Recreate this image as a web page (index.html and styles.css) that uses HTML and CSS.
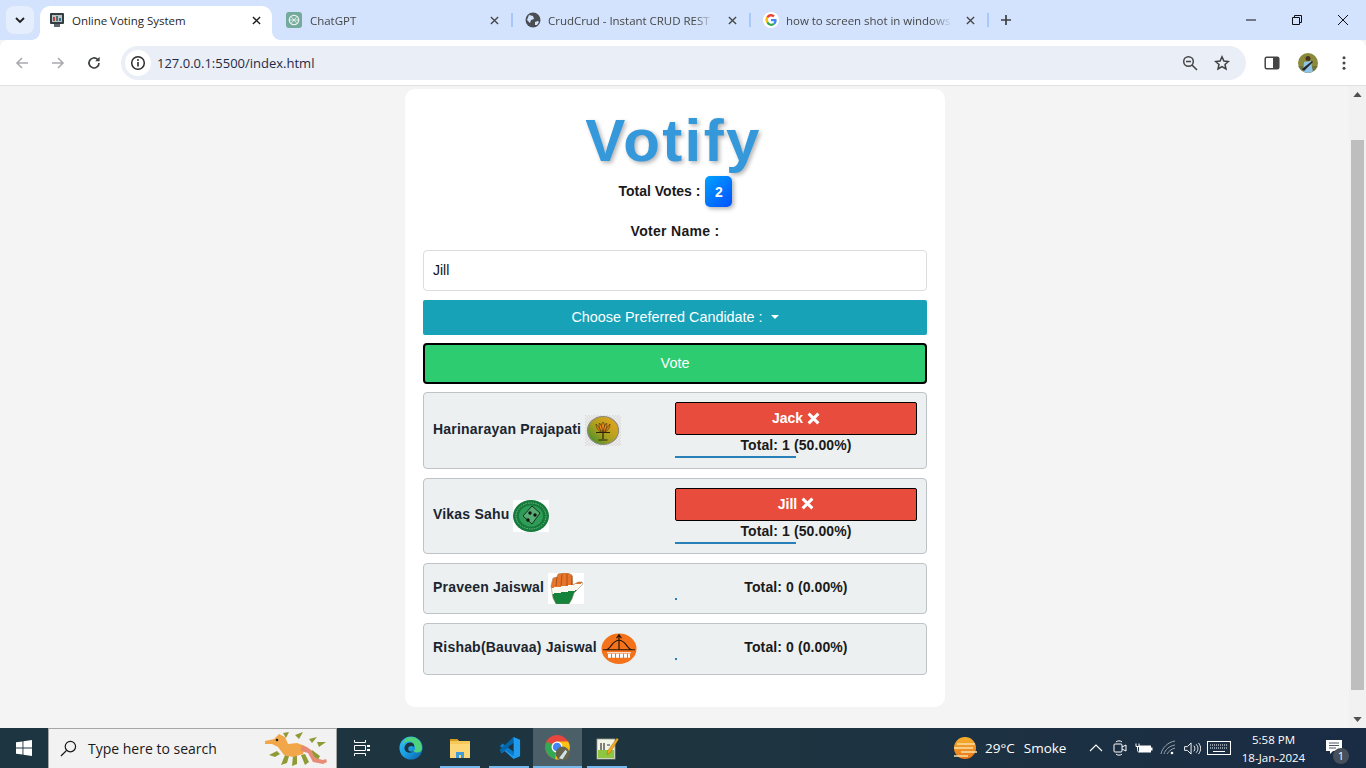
FILE: index.html
```html
<!DOCTYPE html>
<html lang="en">
<head>
<meta charset="utf-8">
<title>Online Voting System</title>
<link rel="stylesheet" href="styles.css">
</head>
<body>
<div class="tabstrip">
  <button class="tabsearch"><svg class="i12" viewBox="0 0 12 12"><path d="M2 4l4 4 4-4" fill="none" stroke="#1f1f1f" stroke-width="1.8"/></svg></button>
  <div class="tab active">
    <svg class="fav" viewBox="0 0 16 16"><rect x="1" y="1" width="14" height="11" rx="1" fill="#333d42"/><rect x="3" y="3" width="10" height="7" fill="#b9c4c6"/><rect x="4" y="5" width="2" height="4" fill="#b5443c"/><rect x="7" y="4" width="2" height="5" fill="#5a6c72"/><rect x="10" y="6" width="2" height="3" fill="#3a6f8c"/><rect x="5" y="12" width="6" height="3" fill="#5d686c"/></svg>
    <span class="tabtitle">Online Voting System</span>
    <svg class="tabclose dark" viewBox="0 0 10 10"><path d="M1 1l8 8M9 1l-8 8"/></svg>
  </div>
  <div class="tab first">
    <svg class="fav" viewBox="0 0 16 16"><rect width="16" height="16" rx="3" fill="#74aa9c"/><circle cx="8" cy="8" r="4.7" fill="none" stroke="#e8f2ef" stroke-width="1.3"/><path d="M5 4.5l6 7M11 4.5l-6 7M3.5 8h9" stroke="#e8f2ef" stroke-width=".9"/></svg>
    <span class="tabtitle">ChatGPT</span>
    <svg class="tabclose" viewBox="0 0 10 10"><path d="M1 1l8 8M9 1l-8 8"/></svg>
  </div>
  <div class="tab sep">
    <svg class="fav" viewBox="0 0 16 16"><circle cx="8" cy="8" r="7.5" fill="#4a4d52"/><path d="M4 3l4 1 1 3-3 1-1 3-3-3zM10 10l3-1 1 1-2 3-2 0z" fill="#d3e3fd"/></svg>
    <span class="tabtitle">CrudCrud - Instant CRUD REST</span>
    <svg class="tabclose" viewBox="0 0 10 10"><path d="M1 1l8 8M9 1l-8 8"/></svg>
  </div>
  <div class="tab sep">
    <svg class="fav" viewBox="0 0 16 16"><circle cx="8" cy="8" r="8" fill="#fff"/><path d="M8 7v2.2h3.3a3.4 3.4 0 0 1-1.3 2l1.8 1.4A5.4 5.4 0 0 0 13.4 7z" fill="#4285f4"/><path d="M3.4 10.700a5.400 5.400 0 0 0 8.400 1.900L10 11.200a3.300 3.300 0 0 1-4.700-1.700z" fill="#34a853"/><path d="M5.300 6.100L3.400 4.700a5.400 5.400 0 0 0 0 6l1.900-1.300a3.300 3.300 0 0 1 0-3.300z" fill="#fbbc05"/><path d="M3.400 4.700l1.900 1.400A3.300 3.300 0 0 1 10.200 5.200l1.600-1.600A5.400 5.400 0 0 0 3.400 4.700z" fill="#ea4335"/></svg>
    <span class="tabtitle">how to screen shot in windows</span>
    <svg class="tabclose" viewBox="0 0 10 10"><path d="M1 1l8 8M9 1l-8 8"/></svg>
  </div>
  <div class="newtab"><svg class="i12" viewBox="0 0 12 12"><path d="M6 1v10M1 6h10" stroke="#3c4043" stroke-width="1.700" fill="none"/></svg></div>
  <div class="winctrls">
    <svg class="winicon" viewBox="0 0 12 12"><path d="M1 6h10" stroke="#111" fill="none"/></svg>
    <svg class="winicon" viewBox="0 0 12 12"><path d="M1.500 3.500h7v7h-7zM3.500 3.500v-2h7v7h-2" stroke="#111" fill="none"/></svg>
    <svg class="winicon" viewBox="0 0 12 12"><path d="M1 1l10 10M11 1L1 11" stroke="#111" fill="none"/></svg>
  </div>
</div>

<div class="toolbar">
  <div class="navbtn"><svg class="i16" viewBox="0 0 16 16"><path d="M14 8H3M8 3L3 8l5 5" fill="none" stroke="#a9abae" stroke-width="1.600"/></svg></div>
  <div class="navbtn"><svg class="i16" viewBox="0 0 16 16"><path d="M2 8h11M8 3l5 5-5 5" fill="none" stroke="#a9abae" stroke-width="1.600"/></svg></div>
  <div class="navbtn"><svg class="i16" viewBox="0 0 16 16"><path d="M13 8a5 5 0 1 1-1.500-3.600" fill="none" stroke="#3c4043" stroke-width="1.700"/><path d="M13.600 1.800v4.400H9.200z" fill="#3c4043"/></svg></div>
  <div class="omnibox">
    <div class="siteinfo"><svg class="i16" viewBox="0 0 16 16"><circle cx="8" cy="8" r="6.300" fill="none" stroke="#2b2b2b" stroke-width="1.500"/><path d="M8 7v4.500" stroke="#2b2b2b" stroke-width="1.600"/><circle cx="8" cy="4.900" r="1" fill="#2b2b2b"/></svg></div>
    <span class="url">127.0.0.1:5500/index.html</span>
    <svg class="omniicon zoomicon" viewBox="0 0 16 16"><circle cx="6.500" cy="6.500" r="4.800" fill="none" stroke="#454545" stroke-width="1.500"/><path d="M4 6.500h5M10 10l5 5" stroke="#454545" stroke-width="1.600"/></svg>
    <svg class="omniicon" viewBox="0 0 16 16"><path d="M8 1.800l1.900 4.200 4.500.5-3.400 3 1 4.500L8 11.700 4 14l1-4.500-3.400-3 4.500-.5z" fill="none" stroke="#3f3f3f" stroke-width="1.500"/></svg>
  </div>
  <div class="navbtn"><svg class="i16" viewBox="0 0 16 16"><rect x="1.200" y="2.200" width="13.600" height="11.600" rx="1.500" fill="#fff" stroke="#454545" stroke-width="1.500"/><rect x="9" y="2.200" width="5.800" height="11.600" fill="#454545"/></svg></div>
  <div class="navbtn"><svg class="avatar" viewBox="0 0 20 20"><defs><clipPath id="ac"><circle cx="10" cy="10" r="10"/></clipPath></defs><g clip-path="url(#ac)"><rect width="20" height="20" fill="#8b8a3c"/><rect y="13" width="20" height="7" fill="#6e7440"/><circle cx="10" cy="5.500" r="2.500" fill="#4a3420"/><path d="M6 9l7-1 2 12H5z" fill="#8fc4e6"/><path d="M4 16l10-8 1 1-9 9z" fill="#22272c"/></g></svg></div>
  <div class="navbtn"><svg class="i16" viewBox="0 0 16 16"><circle cx="8" cy="2.800" r="1.500" fill="#454545"/><circle cx="8" cy="8" r="1.500" fill="#454545"/><circle cx="8" cy="13.200" r="1.500" fill="#454545"/></svg></div>
</div>

<div class="viewport">
  <main class="page">
    <section class="card">
      <h1 class="brand">Votify</h1>
      <div class="totals"><span class="totals-label">Total Votes :</span><span class="badge">2</span></div>
      <label class="voter-label">Voter Name :</label>
      <input class="voter-input" type="text" value="Jill">
      <button class="choose">Choose Preferred Candidate : <span class="caret"></span></button>
      <button class="vote">Vote</button>

      <div class="cand">
        <div class="cand-name"><span>Harinarayan Prajapati</span>
          <svg class="logo" viewBox="0 0 36 31"><defs><pattern id="chk" width="3" height="3" patternUnits="userSpaceOnUse"><rect width="3" height="3" fill="#f2f2f2"/><rect width="1.500" height="1.500" fill="#d9d9d9"/><rect x="1.500" y="1.500" width="1.500" height="1.500" fill="#d9d9d9"/></pattern><linearGradient id="bjp" x1="0" y1="1" x2="1" y2="0"><stop offset="0" stop-color="#2c8a2e"/><stop offset=".45" stop-color="#a9a01f"/><stop offset="1" stop-color="#f5a51b"/></linearGradient></defs><rect width="36" height="31" fill="url(#chk)"/><ellipse cx="18" cy="15.500" rx="15.500" ry="14" fill="url(#bjp)" stroke="#8a8a80" stroke-width="1.200"/><g fill="#ef8a1f" stroke="#3f2c08" stroke-width=".6"><path d="M18 7c2 2 2 7 0 10-2-3-2-8 0-10z"/><path d="M14.500 8c2 2 3 6 3 9-3-2-4-6-3-9z"/><path d="M21.500 8c-2 2-3 6-3 9 3-2 4-6 3-9z"/><path d="M11 9c2 2 4 5 5 8-3-1-5-5-5-8z"/><path d="M25 9c-2 2-4 5-5 8 3-1 5-5 5-8z"/></g><path d="M11 17.500h14M18 17v7M13.500 25h9" stroke="#2e2408" stroke-width="1.200" fill="none"/></svg>
        </div>
        <div class="cand-side">
          <button class="voter-chip">Jack <svg class="x" viewBox="0 0 12 12"><path d="M1.500 1.500l9 9M10.500 1.500l-9 9"/></svg></button>
          <div class="tot">Total: 1 (50.00%)</div>
          <div class="bar half"></div>
        </div>
      </div>

      <div class="cand">
        <div class="cand-name"><span>Vikas Sahu</span>
          <svg class="logo vikas" viewBox="0 0 36 32"><rect width="36" height="32" fill="#fff"/><ellipse cx="18" cy="16" rx="18" ry="16" fill="#167a3c"/><ellipse cx="18" cy="16" rx="15" ry="13" fill="none" stroke="#6cc088" stroke-width="1" stroke-dasharray="1.500 1"/><ellipse cx="18" cy="16" rx="12" ry="10.500" fill="#2f9d57"/><path d="M19 6l8 7-8 11-9-8z" fill="#58ad74" stroke="#0f2a1a" stroke-width=".9"/><circle cx="17" cy="13" r="1.700" fill="#111"/><circle cx="22" cy="15" r="1.700" fill="#111"/><circle cx="15" cy="20" r="1.700" fill="#111"/></svg>
        </div>
        <div class="cand-side">
          <button class="voter-chip">Jill <svg class="x" viewBox="0 0 12 12"><path d="M1.500 1.500l9 9M10.500 1.500l-9 9"/></svg></button>
          <div class="tot">Total: 1 (50.00%)</div>
          <div class="bar half"></div>
        </div>
      </div>

      <div class="cand short">
        <div class="cand-name"><span>Praveen Jaiswal</span>
          <svg class="logo" viewBox="0 0 36 31"><defs><linearGradient id="flag" x1="0" y1="0" x2=".15" y2="1"><stop offset=".47" stop-color="#e8742a"/><stop offset=".47" stop-color="#fbf8f0"/><stop offset=".66" stop-color="#fbf8f0"/><stop offset=".66" stop-color="#15843a"/></linearGradient></defs><rect width="36" height="31" fill="#fff"/><path d="M3 13l2-8 4-1 1-3 5-1 5 0 4 2 1 10 5-3 4 0 1 2-4 4-5 5-2 6-3 5H8l-3-6z" fill="url(#flag)" stroke="#8a7a66" stroke-width=".5"/><path d="M9 4l-1 9M14 1l-1 12M19 1v12M24 3l-.500 9" stroke="#9a4a14" stroke-width=".8" fill="none"/></svg>
        </div>
        <div class="cand-side">
          <div class="tot">Total: 0 (0.00%)</div>
          <div class="bar none"></div>
        </div>
      </div>

      <div class="cand short">
        <div class="cand-name"><span>Rishab(Bauvaa) Jaiswal</span>
          <svg class="logo tall" viewBox="0 0 36 31"><ellipse cx="18" cy="15.500" rx="17.500" ry="15.200" fill="#f4731a"/><path d="M2 16.500h32M5 16.500C10 16 11 7 18 7s8 9 13 9.500" fill="none" stroke="#25140a" stroke-width="1.200"/><path d="M18 2v14.500M15.500 5L18 1.500 20.500 5" fill="none" stroke="#25140a" stroke-width="1.200"/><path d="M6 19.500h24" stroke="#fff" stroke-width="1"/><path d="M7 22.500h22" stroke="#fff" stroke-width="4" stroke-dasharray="3 1"/></svg>
        </div>
        <div class="cand-side">
          <div class="tot">Total: 0 (0.00%)</div>
          <div class="bar none"></div>
        </div>
      </div>
    </section>
  </main>
  <aside class="scrollbar">
    <svg class="sarrow" viewBox="0 0 10 6"><path d="M5 0l5 6H0z" fill="#505050"/></svg>
    <div class="strack"><div class="sthumb"></div></div>
    <svg class="sarrow" viewBox="0 0 10 6"><path d="M0 0h10L5 6z" fill="#505050"/></svg>
  </aside>
</div>

<footer class="taskbar">
  <div class="start"><svg class="winlogo" viewBox="0 0 16 16"><path d="M0 2.300l6.500-.9v6.200H0zM7.400 1.300L16 0v7.600H7.400zM0 8.500h6.500v6.100L0 13.700zM7.400 8.500H16V16l-8.600-1.200z" fill="#fff"/></svg></div>
  <div class="search">
    <svg class="searchglass" viewBox="0 0 18 18"><circle cx="11" cy="7" r="5.500" fill="none" stroke="#1a1a1a" stroke-width="1.300"/><path d="M7 11l-6 6" stroke="#1a1a1a" stroke-width="1.400"/></svg>
    <span class="searchtext">Type here to search</span>
    <svg class="doodle" viewBox="0 0 66 36"><path d="M18 2l6-1-3 6zM30 4l8-3-4 7zM44 8l8-2-5 6zM52 11l9 0-7 5zM12 20l-8 4 6 2 5-3zM20 24l-4 10 6-2 2-7zM28 25l-1 10 5-2 0-8zM36 24l4 10 4-3-4-8zM44 22l9 7 2-4-8-6z" fill="#8f9a35"/><path d="M0 10l9-2 5-5 6 3 3 7 9-1 8 3-2 8-10 3-9-2-6-8-6-3-7 0z" fill="#f2a64a"/><path d="M36 14l6 2 4 3 4 8 8 2 3-1 1 3-4 2-10-2-5-9-7-2z" fill="#e78a76"/><circle cx="12" cy="9" r="1.300" fill="#222"/></svg>
  </div>
  <div class="app"><svg class="appicon" viewBox="0 0 16 16"><path d="M.5 0v2.500h11V0M.5 16v-2.500h11V16M.5 5.500h11v5H.5z" fill="none" stroke="#fff"/><rect x="13" y="5" width="3" height="2" fill="#fff"/><rect x="13" y="9" width="3" height="2" fill="#fff"/></svg></div>
  <div class="app"><svg class="appicon big" viewBox="0 0 26 26"><defs><linearGradient id="edge" x1="0" y1="0" x2="1" y2="1"><stop offset="0" stop-color="#35c1f1"/><stop offset=".5" stop-color="#1b9de2"/><stop offset="1" stop-color="#0c59a4"/></linearGradient></defs><circle cx="13" cy="13" r="12.500" fill="url(#edge)"/><path d="M9 2c8-3 16 3 16 11 0 3-2 5-5 5-2 0-4-1-4-2 1-1 2-2 1-5-1-4-5-6-8-5-2 .5-4 2-5 4 .5-3 2.500-7 5-8z" fill="#4fd27c"/><path d="M16 16c-2 3-9 3-10-2-.5-3 2-7 6-7 4 0 5 3 4 5-2-2-6-1-6 2s4 4 6 2z" fill="#1c3340"/></svg></div>
  <div class="app lit"><svg class="appicon big" viewBox="0 0 24 24"><path d="M2 3h7l2 2h11v17H2z" fill="#f5c858"/><path d="M2 3h7l2 2H2z" fill="#d99a1e"/><path d="M2 8h20v14H2z" fill="#fbd777"/><path d="M8 22v-6h8v6h-3v-3h-2v3z" fill="#3f9bd9"/></svg></div>
  <div class="app lit"><svg class="appicon big" viewBox="0 0 26 26"><path d="M18 1l7 3v18l-7 3L6 14z" fill="#1f9cf0"/><path d="M18 7v12l-8-6z" fill="#1c3340"/><path d="M6 8l12 9v5L3 11zM3 15l3-2 3 3-4 3z" fill="#0a7ac9"/><path d="M18 1L3 15l2 3L18 7z" fill="#0065a9"/></svg></div>
  <div class="app active lit"><svg class="appicon chrome" viewBox="0 0 28 28"><circle cx="13" cy="13" r="13" fill="#e8453c"/><path d="M13 13L2 7a13 13 0 0 0 9 19z" fill="#34a853"/><path d="M13 7h12a13 13 0 0 1-14 19z" fill="#fbc116"/><circle cx="13" cy="13" r="6" fill="#fff"/><circle cx="13" cy="13" r="4.600" fill="#4285f4"/><circle cx="19" cy="20" r="7.500" fill="#66644a"/><path d="M15 25l7-9 2 2-5 8z" fill="#cfe2ef"/></svg></div>
  <div class="app lit"><svg class="appicon big" viewBox="0 0 24 24"><rect x="2" y="3" width="18" height="20" fill="#f2f4e6" stroke="#9aa28a" stroke-width=".8"/><rect x="3" y="14" width="16" height="8" fill="#8ec63f"/><path d="M6 7v7M9 7v7M12 9h3" stroke="#333" stroke-width="1.200"/><path d="M22 2l1.500 1.500L15 17l-3 1.500.5-3.500z" fill="#f3a91f" stroke="#8a5a10" stroke-width=".4"/></svg></div>
  <div class="tray">
    <div class="weather">
      <svg class="sun" viewBox="0 0 24 24"><defs><linearGradient id="sung" x1="0" y1="0" x2="0" y2="1"><stop offset="0" stop-color="#f7b02f"/><stop offset="1" stop-color="#e8771a"/></linearGradient></defs><circle cx="12" cy="12" r="11" fill="url(#sung)"/><path d="M4 8h18M1 12h19M8 16h16M1 20h14" stroke="#f6e0a8" stroke-width="1.300"/></svg>
      <span class="wtext temp">29°C</span><span class="wtext">Smoke</span>
    </div>
    <div class="ticon"><svg class="i12 wide" viewBox="0 0 14 8"><path d="M1 7l6-6 6 6" fill="none" stroke="#fff" stroke-width="1.100"/></svg></div>
    <div class="ticon"><svg class="i16 tall16" viewBox="0 0 14 18"><rect x="1" y="5" width="8" height="8" rx="1" fill="none" stroke="#fff"/><path d="M9 8l4-2v6l-4-2M3 3c1-1.500 5-1.500 6 0M3 15c1 1.500 5 1.500 6 0" fill="none" stroke="#fff"/></svg></div>
    <div class="ticon"><svg class="i16 batt" viewBox="0 0 18 12"><path d="M1 1v3h3V1M2.500 4v3" stroke="#fff" fill="none"/><rect x="4" y="3" width="12" height="7" fill="#fff"/><rect x="16" y="5" width="1.500" height="3" fill="#fff"/><path d="M2.500 7c0 2 .5 2.500 1.500 2.500" stroke="#fff" fill="none"/></svg></div>
    <div class="ticon"><svg class="i16" viewBox="0 0 16 16"><path d="M1 14C2 8 8 2 15 1M4 14c1-4 5-8 11-9M7 14c1-2 4-5 8-6" fill="none" stroke="#9aa3ad"/><circle cx="12" cy="13" r="1.300" fill="#fff"/></svg></div>
    <div class="ticon vol"><svg class="i16 batt" viewBox="0 0 18 14"><path d="M1 5h3l4-4v12l-4-4H1zM11 4c1.500 2 1.500 4 0 6M13.500 2.500c2.500 3 2.500 6 0 9M16 1c3 4 3 8 0 12" fill="none" stroke="#fff"/></svg></div>
    <div class="ticon kbd"><svg class="kbdicon" viewBox="0 0 24 14"><rect x=".5" y=".5" width="23" height="13" fill="none" stroke="#fff"/><path d="M3 4h18M3 7h18" stroke="#fff" stroke-dasharray="1 1"/><path d="M6 10.500h12" stroke="#fff"/></svg></div>
    <div class="clock"><span>5:58 PM</span><span>18-Jan-2024</span></div>
    <div class="notif"><svg class="notifbox" viewBox="0 0 16 14"><path d="M0 0h16v11H7l-3 3v-3H0z" fill="#fff"/><path d="M3 3h10M3 5.500h10M3 8h7" stroke="#1c2b40" stroke-width=".8"/></svg><span class="notifnum">1</span></div>
  </div>
</footer>
</body>
</html>
```
FILE: styles.css
```css
* { box-sizing: border-box; }
html, body { margin: 0; height: 100%; }
body { width: 1366px; height: 768px; overflow: hidden; display: flex; flex-direction: column; font-family: "Liberation Sans", Arial, sans-serif; background: #f4f4f4; }
svg { display: block; flex: none; }
button { font-family: inherit; }
.i12 { width: 12px; height: 12px; }
.i16 { width: 16px; height: 16px; }

/* tab strip */
.tabstrip { height: 40px; flex: none; display: flex; background: #d3e3fd; font-family: "Open Sans", "Noto Sans", sans-serif; font-size: 11.5px; }
.tabsearch { width: 28px; height: 28px; margin: 6px 0 0 6px; border: 0; padding: 0; background: #e5eefc; border-radius: 8px; display: flex; align-items: center; justify-content: center; }
.tab { width: 238px; height: 34px; margin-top: 6px; display: flex; align-items: center; padding: 0 12px 6px 13px; position: relative; color: #454746; }
.tab.active { width: 232px; margin-left: 6px; background: #fff; border-radius: 10px 10px 0 0; color: #1f1f1f; padding: 0 10px 6px 9px; }
.tab.active::before, .tab.active::after { content: ""; position: absolute; bottom: 0; width: 8px; height: 8px; background: radial-gradient(circle at 0 0, #d3e3fd 7.500px, #fff 8px); }
.tab.active::before { left: -8px; }
.tab.active::after { right: -8px; background: radial-gradient(circle at 100% 0, #d3e3fd 7.500px, #fff 8px); }
.tab.first { margin-left: 2px; padding-left: 12px; }
.tab.sep::before { content: ""; position: absolute; left: -1px; top: 7px; width: 2px; height: 14px; background: #a8c7fa; }
.newtab::before { content: ""; }
.fav { width: 16px; height: 16px; margin-right: 7px; }
.tab.first .fav { margin-right: 8px; }
.tabtitle { flex: 1; overflow: hidden; white-space: nowrap; letter-spacing: -.03px; -webkit-mask-image: linear-gradient(90deg, #000 146px, transparent 166px); mask-image: linear-gradient(90deg, #000 146px, transparent 166px); }
.tab.active .tabtitle { -webkit-mask-image: none; mask-image: none; }
.tabclose { width: 9px; height: 9px; margin-left: 8px; margin-right: 1px; }
.tabclose path { stroke: #454746; stroke-width: 1.500; fill: none; }
.tabclose.dark path { stroke: #1f1f1f; }
.newtab { width: 36px; height: 34px; margin-top: 6px; padding-bottom: 6px; display: flex; align-items: center; justify-content: center; position: relative; }
.newtab::before { position: absolute; left: -1px; top: 7px; width: 2px; height: 14px; background: #a8c7fa; }
.winctrls { margin-left: auto; display: flex; align-items: center; height: 40px; }
.winicon { width: 12px; height: 12px; margin: 0 17px; }

/* toolbar */
.toolbar { height: 46px; flex: none; display: flex; align-items: center; padding: 0 4px; background: #fff; border-radius: 8px 8px 0 0; border-bottom: 1px solid #dfe1e5; }
.navbtn { width: 36px; height: 34px; display: flex; align-items: center; justify-content: center; }
.omnibox { flex: 1; height: 34px; margin: 0 8px 0 9px; background: #e9eef7; border-radius: 17px; display: flex; align-items: center; padding: 0 16px 0 4px; }
.siteinfo { width: 26px; height: 26px; border-radius: 50%; background: #fff; display: flex; align-items: center; justify-content: center; }
.url { margin-left: 6px; font-family: "Open Sans", "Noto Sans", sans-serif; font-size: 13px; color: #1f2b46; }
.omniicon { width: 16px; height: 16px; }
.zoomicon { margin-left: auto; margin-right: 16px; }
.avatar { width: 20px; height: 20px; }

/* page */
.viewport { flex: 1; min-height: 0; display: flex; }
.page { flex: 1; min-width: 0; background: #f4f4f4; display: flex; justify-content: center; align-items: flex-start; padding: 3px 0 0 1px; }
.card { width: 540px; height: 618px; background: #fff; border-radius: 10px; padding: 0 18px; display: flex; flex-direction: column; }
.brand { margin: 21px 0 0; padding-right: 3px; height: 66px; line-height: 62px; font-size: 60px; font-weight: 700; letter-spacing: 2.400px; text-align: center; color: #3498db; text-shadow: 2px 2px 4px rgba(0,0,0,.3); }
.totals { height: 31px; display: flex; justify-content: center; align-items: center; gap: 5px; padding-left: 1px; font-size: 14px; font-weight: 700; color: #1a1a1a; }
.totals-label { margin-bottom: 2px; }
.badge { width: 27px; height: 31px; display: flex; align-items: center; justify-content: center; border-radius: 5px; color: #fff; background: linear-gradient(135deg, #00a2ff, #0050ff); box-shadow: 2px 2px 4px rgba(0,0,0,.3); }
.voter-label { margin-top: 16px; height: 16px; line-height: 16px; text-align: center; font-size: 14px; font-weight: 700; letter-spacing: .3px; color: #1a1a1a; }
.voter-input { margin-top: 11px; height: 41px; width: 100%; flex: none; padding: 0 9px 2px; border: 1px solid #ddd; border-radius: 4px; font: 14px "Liberation Sans", Arial, sans-serif; color: #111; background: #fff; }
.choose { margin-top: 9px; height: 35px; flex: none; border: 0; padding: 0 0 2px; border-radius: 2px; background: #17a2b8; color: #fff; font-size: 14.400px; }
.caret { display: inline-block; margin-left: 4px; vertical-align: 3px; border-top: 4.500px solid #fff; border-left: 4.500px solid transparent; border-right: 4.500px solid transparent; }
.vote { margin-top: 8px; height: 41px; flex: none; border: 2px solid #000; padding: 0 0 2px; border-radius: 4px; background: #2ecc71; color: #fff; font-size: 14.400px; }
.cand { margin-top: 9px; flex: none; display: grid; grid-template-columns: 1fr 1fr; align-items: center; padding: 9.300px 9px; background: #ecf0f1; border: 1px solid #bdc3c7; border-radius: 4px; }
.vote + .cand { margin-top: 8px; }
.cand.short { padding-top: 9px; padding-bottom: 9px; }
.cand-name { display: flex; align-items: center; gap: 4px; font-size: 14px; font-weight: 700; letter-spacing: .2px; color: #1a2530; }
.cand-name span { margin-bottom: 3px; }
.logo { width: 36px; height: 31px; }
.logo.vikas { height: 32px; }
.logo.tall { height: 31.500px; }
.cand-side { display: flex; flex-direction: column; align-items: stretch; }
.voter-chip { height: 33px; border: 1px solid #000; border-radius: 2px; background: #e74c3c; color: #fff; font-size: 14px; font-weight: 700; display: flex; align-items: center; justify-content: center; gap: 4px; padding: 0 0 1px; }
.x { width: 13px; height: 13px; }
.x path { stroke: #fff; stroke-width: 2.800; fill: none; }
.tot { height: 21px; line-height: 21px; text-align: center; font-size: 14px; font-weight: 700; letter-spacing: .1px; color: #1a1a1a; }
.bar { height: 2px; background: #2980b9; }
.bar.half { width: 50%; }
.bar.none { width: 2px; }

/* scrollbar */
.scrollbar { width: 17px; flex: none; background: #f1f1f1; display: flex; flex-direction: column; align-items: center; padding: 6px 0; }
.sarrow { width: 9px; height: 5px; }
.strack { flex: 1; width: 100%; padding: 43px 2px 27px; }
.sthumb { height: 100%; background: #bebebe; }

/* taskbar */
.taskbar { height: 40px; flex: none; display: flex; background: linear-gradient(90deg, #1d3540 0%, #1e3540 50%, #1a2c44 100%); color: #fff; font-family: "Open Sans", "Noto Sans", sans-serif; }
.start { width: 48px; display: flex; align-items: center; justify-content: center; }
.winlogo { width: 16px; height: 16px; }
.search { width: 289px; display: flex; align-items: center; padding: 0 5px 0 11px; background: #f2f2f2; border: 1px solid #a6a6a6; border-bottom: 0; color: #1a1a1a; }
.searchglass { width: 17px; height: 17px; }
.searchtext { margin-left: 11px; font-size: 14px; flex: 1; white-space: nowrap; }
.doodle { width: 66px; height: 36px; }
.app { width: 49px; display: flex; align-items: center; justify-content: center; position: relative; }
.app.lit::after { content: ""; position: absolute; left: 5px; right: 4px; bottom: 0; height: 2px; background: #76b9ed; }
.app.active { background: #4b5f68; }
.app.active::after { left: 0; right: 0; }
.appicon { width: 16px; height: 16px; }
.appicon.big { width: 24px; height: 24px; }
.appicon.chrome { width: 26px; height: 26px; }
.tray { margin-left: auto; display: flex; align-items: center; padding-right: 11px; }
.weather { width: 134px; display: flex; align-items: center; padding-left: 3px; font-size: 13.500px; }
.sun { width: 24px; height: 24px; margin-right: 8px; }
.wtext { white-space: nowrap; }
.temp { margin-right: 9px; }
.ticon { width: 24px; display: flex; justify-content: center; align-items: center; }
.wide { width: 14px; height: 8px; }
.tall16 { width: 14px; height: 18px; }
.batt { width: 18px; height: 13px; }
.vol { width: 23px; }
.kbd { width: 32px; }
.kbdicon { width: 24px; height: 14px; }
.clock { width: 77px; display: flex; flex-direction: column; align-items: center; gap: 3px; font-size: 11.500px; line-height: 15px; }
.notif { width: 43px; height: 40px; position: relative; display: flex; align-items: center; justify-content: center; }
.notifbox { width: 16px; height: 14px; margin-top: -2px; }
.notifnum { position: absolute; left: 21px; top: 20px; width: 16px; height: 16px; border-radius: 50%; background: #47505a; color: #fff; font-size: 11px; line-height: 16px; text-align: center; }
```
